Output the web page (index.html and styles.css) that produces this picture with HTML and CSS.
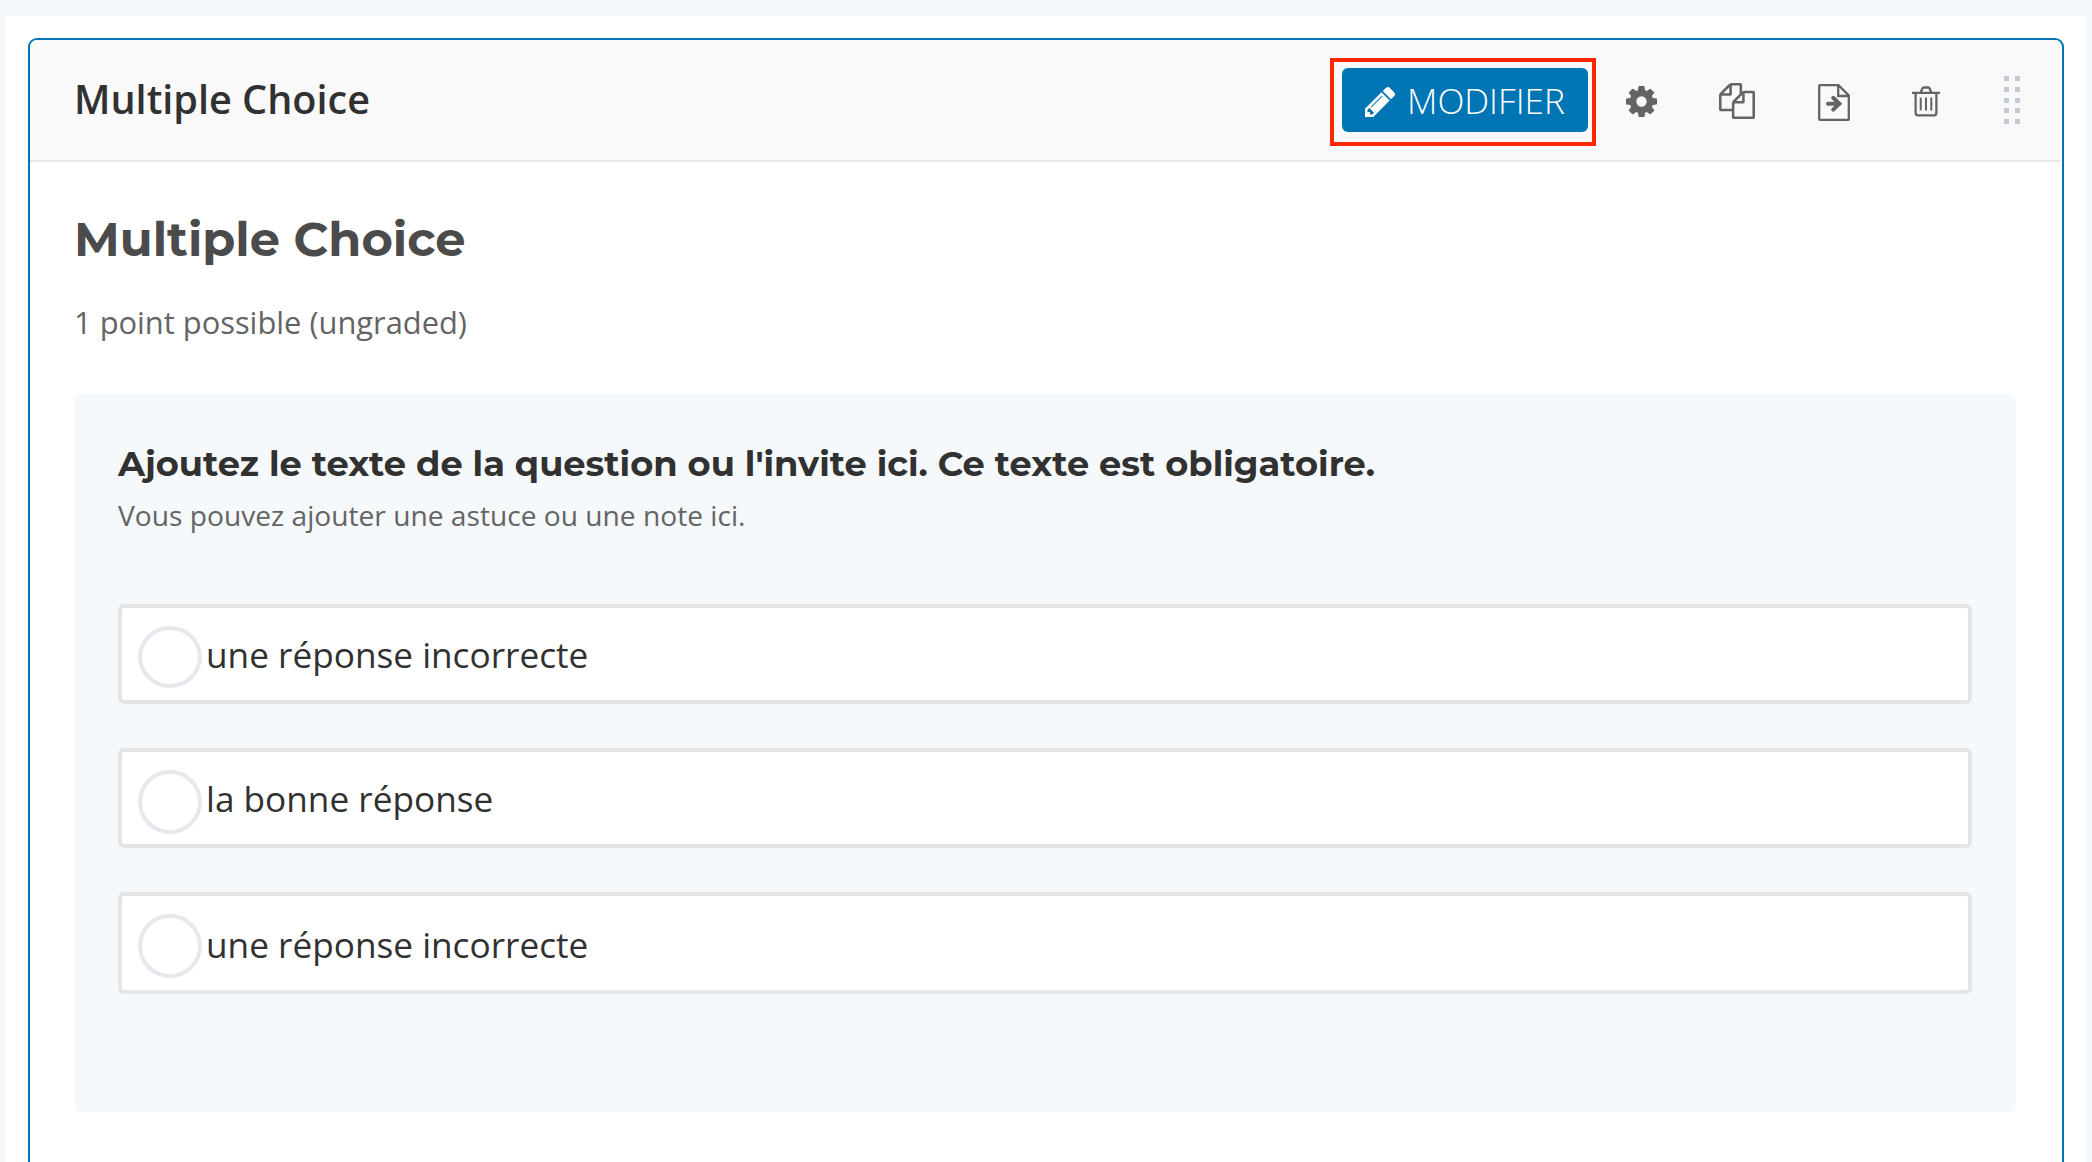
FILE: index.html
```html
<!DOCTYPE html>
<html lang="fr">
<head>
<meta charset="utf-8">
<title>Multiple Choice</title>
<link rel="stylesheet" href="styles.css">
</head>
<body>
<main class="page">
  <section class="card">
    <header class="card-header">
      <h2 class="card-title"><span>Multiple Choice</span></h2>
      <div class="actions">
        <div class="highlight">
          <button class="edit" type="button">
            <svg class="pencil" viewBox="128 149 1515 1515"><path d="M491 1536l91-91-235-235-91 91v107h128v128h107zm523-928q0-22-22-22-10 0-17 7l-542 542q-7 7-7 17 0 22 22 22 10 0 17-7l542-542q7-7 7-17zm-54-192l416 416-832 832h-416v-416zm683 96q0 53-37 90l-166 166-416-416 166-165q36-38 90-38 53 0 91 38l235 234q37 39 37 91z"/></svg>
            <span class="edit-label">MODIFIER</span>
          </button>
        </div>
        <svg class="icon cog" viewBox="128 128 1536 1536"><path d="M1152 896q0-106-75-181t-181-75-181 75-75 181 75 181 181 75 181-75 75-181zm512-109v222q0 12-8 23t-20 13l-185 28q-19 54-39 91 35 50 107 138 10 12 10 25t-9 23q-27 37-99 108t-94 71q-12 0-26-9l-138-108q-44 23-91 38-16 136-29 186-7 28-36 28h-222q-14 0-24.5-8.5t-11.5-21.5l-28-184q-49-16-90-37l-141 107q-10 9-25 9-14 0-25-11-126-114-165-168-7-10-7-23 0-12 8-23 15-21 51-66.5t54-70.5q-27-50-41-99l-183-27q-13-2-21-12.5t-8-23.5v-222q0-12 8-23t19-13l186-28q14-46 39-92-40-57-107-138-10-12-10-24 0-10 9-23 26-36 98.5-107.5t94.5-71.5q13 0 26 10l138 107q44-23 91-38 16-136 29-186 7-28 36-28h222q14 0 24.5 8.5t11.5 21.5l28 184q49 16 90 37l142-107q9-9 24-9 13 0 25 10 129 119 165 170 7 8 7 22 0 12-8 23-15 21-51 66.5t-54 70.5q26 50 41 98l183 28q13 2 21 12.5t8 23.5z"/></svg>
        <svg class="icon copy" viewBox="0 0 1792 1792"><path d="M1696 384q40 0 68 28t28 68v1216q0 40-28 68t-68 28h-960q-40 0-68-28t-28-68v-288h-544q-40 0-68-28t-28-68v-672q0-40 20-88t48-76l408-408q28-28 76-48t88-20h416q40 0 68 28t28 68v328q68-40 128-40h416zm-544 213l-299 299h299v-299zm-640-384l-299 299h299v-299zm196 647l316-316v-416h-384v416q0 40-28 68t-68 28h-416v640h512v-256q0-40 20-88t48-76zm956 804v-1152h-384v416q0 40-28 68t-68 28h-416v640h896z"/></svg>
        <svg class="icon move" viewBox="0 0 32 37"><path class="line" d="M2 1.2h18.5L30.8 11.5V35a.8.8 0 0 1-.8.8H2a.8.8 0 0 1-.8-.8V2a.8.8 0 0 1 .8-.8zM20.2 1.5V12h10.3"/><path class="arrow" d="M10 19.7h11M15.2 13.8l6.2 5.9-6.2 5.9"/></svg>
        <svg class="icon trash" viewBox="0 0 28 31"><path class="line" d="M0 6.9h28M3.6 7v19.5q0 2.8 2.4 2.8h16q2.4 0 2.4-2.8V7M8.8 6.5l1.3-3.7q.5-1.3 1.9-1.3h4q1.4 0 1.9 1.3l1.3 3.7"/><path class="line bars" d="M8.7 11.5v13M14 11.5v13M19.3 11.5v13"/></svg>
        <div class="grip"><i></i><i></i><i></i><i></i><i></i><i></i><i></i><i></i><i></i><i></i></div>
      </div>
    </header>
    <div class="card-body">
      <h3 class="problem-title"><span>Multiple Choice</span></h3>
      <p class="progress"><span>1 point possible (ungraded)</span></p>
      <div class="problem">
        <p class="question"><span>Ajoutez le texte de la question ou l'invite ici. Ce texte est obligatoire.</span></p>
        <p class="hint"><span>Vous pouvez ajouter une astuce ou une note ici.</span></p>
        <div class="options">
          <label class="option first"><i class="radio"></i><span>une réponse incorrecte</span></label>
          <label class="option"><i class="radio"></i><span>la bonne réponse</span></label>
          <label class="option last"><i class="radio"></i><span>une réponse incorrecte</span></label>
        </div>
      </div>
    </div>
  </section>
</main>
</body>
</html>
```
FILE: styles.css
```css
* { box-sizing: border-box; }
body {
  margin: 0;
  height: 1162px;
  padding: 16px 6px 0;
  background: #f5f9fc;
  font-family: "Open Sans", sans-serif;
  color: #313131;
}
h2, h3, p { margin: 0; white-space: nowrap; }
.page { background: #fff; padding: 22px 22px 0; height: 1146px; }
.card {
  height: 1124px;
  border: 2px solid #0075b4;
  border-bottom: 0;
  border-radius: 9px 9px 0 0;
  overflow: hidden;
}
.card-header {
  display: flex;
  justify-content: space-between;
  height: 122px;
  margin-right: 2px;
  padding: 0 40px 0 44px;
  background: #f9f9f9;
  border-bottom: 2px solid #e5e5e5;
}
.card-title { font-size: 39.6px; font-weight: 600; line-height: 52px; padding-top: 33px; }
.actions { display: flex; align-items: flex-start; }
.highlight {
  width: 266px;
  height: 88px;
  margin-top: 18px;
  border: 4px solid #ff2600;
  padding: 6px 4px 0 8px;
}
.edit {
  display: flex;
  align-items: center;
  width: 246px;
  height: 64px;
  padding: 0 0 0 23px;
  gap: 12px;
  border: 0;
  border-radius: 6px;
  background: #0075b4;
  color: #fff;
  font: 300 35.2px/48px "Open Sans", sans-serif;
}
.pencil { width: 30px; height: 30px; fill: #fff; flex: none; margin-top: 4px; }
.icon { flex: none; fill: #646464; }
.cog { width: 31px; height: 31px; margin: 46px 0 0 30px; }
.copy { width: 36px; height: 36px; margin: 43px 0 0 61.5px; }
.move { width: 32px; height: 37px; margin: 44px 0 0 63.5px; }
.trash { width: 28px; height: 31px; margin: 46px 0 0 62px; }
.line { fill: none; stroke: #646464; stroke-width: 2.3; }
.bars { stroke-width: 2; }
.arrow { fill: none; stroke: #646464; stroke-width: 4; stroke-linecap: round; }
.grip {
  display: grid;
  grid-template-columns: 5px 5px;
  grid-auto-rows: 5px;
  gap: 5.8px 6px;
  margin: 36px 0 0 64px;
}
.grip i { background: #c3ccd6; }
.card-body { padding: 0 46px 0 44px; }
.problem-title {
  padding-top: 44px;
  font: 700 47.9px/66px Montserrat, Inter, sans-serif;
  color: #4b4b4b;
}
.progress { padding-top: 28px; font-size: 30.85px; line-height: 44px; color: #646464; }
.problem {
  height: 718px;
  margin-top: 50px;
  padding: 45px 44px 0;
  border-radius: 6px;
  background: #f5f9fc;
}
.question { font: 700 35.22px/50px Montserrat, Inter, sans-serif; }
.hint { font-size: 28.16px; line-height: 40px; padding-top: 6px; color: #646464; }
.options { display: grid; gap: 44px; padding-top: 69px; }
.option {
  display: flex;
  align-items: flex-start;
  height: 100px;
  padding: 18px 16px;
  border: 4px solid #e5e5e5;
  border-radius: 6px;
  background: #fff;
  font-size: 35.2px;
  line-height: 50px;
  gap: 4px;
}
.option.last { height: 102px; }
.option span { padding-top: 3px; }
.option.last span { padding-top: 5px; }
.radio { width: 64px; height: 64px; border: 4px solid #e7e8ed; border-radius: 50%; flex: none; }
.first .radio { height: 62px; }
```
